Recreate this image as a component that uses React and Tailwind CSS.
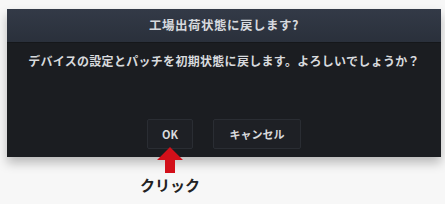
export default function App() {
  return (
    <div
      className="w-[445px] h-[204px] bg-[#f7f7f7] pt-[9px] pl-[7px] pr-[4px]"
      style={{ fontFamily: '"Noto Sans CJK JP", "Noto Sans", sans-serif' }}
    >
      {/* Dialog */}
      <div className="w-[434px] h-[148px] bg-[#1b1d21] flex flex-col shadow-[0_6px_10px_rgba(0,0,0,0.25)]">
        <div className="h-[34px] bg-gradient-to-b from-[#333a47] to-[#2a303b] border-b border-[#15171a] flex items-center justify-center">
          <span className="text-[12.5px] font-bold text-[#d6d9de] tracking-[0.5px]">工場出荷状態に戻します?</span>
        </div>
        <div className="flex-1 flex flex-col items-center">
          <p className="mt-[9px] text-[12px] font-bold text-[#d8dadd] tracking-[0.3px]">
            デバイスの設定とパッチを初期状態に戻します。よろしいでしょうか？
          </p>
          <div className="mt-auto mb-[8px] flex gap-[20px]">
            <button className="w-[46px] h-[30px] bg-[#1e2025] border border-[#2a2d33] rounded-[2px] text-[11px] font-bold text-[#d8dadd]">
              OK
            </button>
            <button className="w-[88px] h-[30px] bg-[#1e2025] border border-[#2a2d33] rounded-[2px] text-[11px] font-bold text-[#d8dadd]">
              キャンセル
            </button>
          </div>
        </div>
      </div>
      {/* Annotation */}
      <div className="w-[46px] ml-[140px] flex flex-col items-center">
        <svg width="28" height="26" viewBox="0 0 28 26" className="mt-[-10px]">
          <path d="M14 0 L27 13 L19 13 L19 26 L9 26 L9 13 L1 13 Z" fill="#d3101a" />
        </svg>
        <span className="mt-[1px] text-[15px] leading-[22px] font-bold text-[#222] whitespace-nowrap">クリック</span>
      </div>
    </div>
  )
}
